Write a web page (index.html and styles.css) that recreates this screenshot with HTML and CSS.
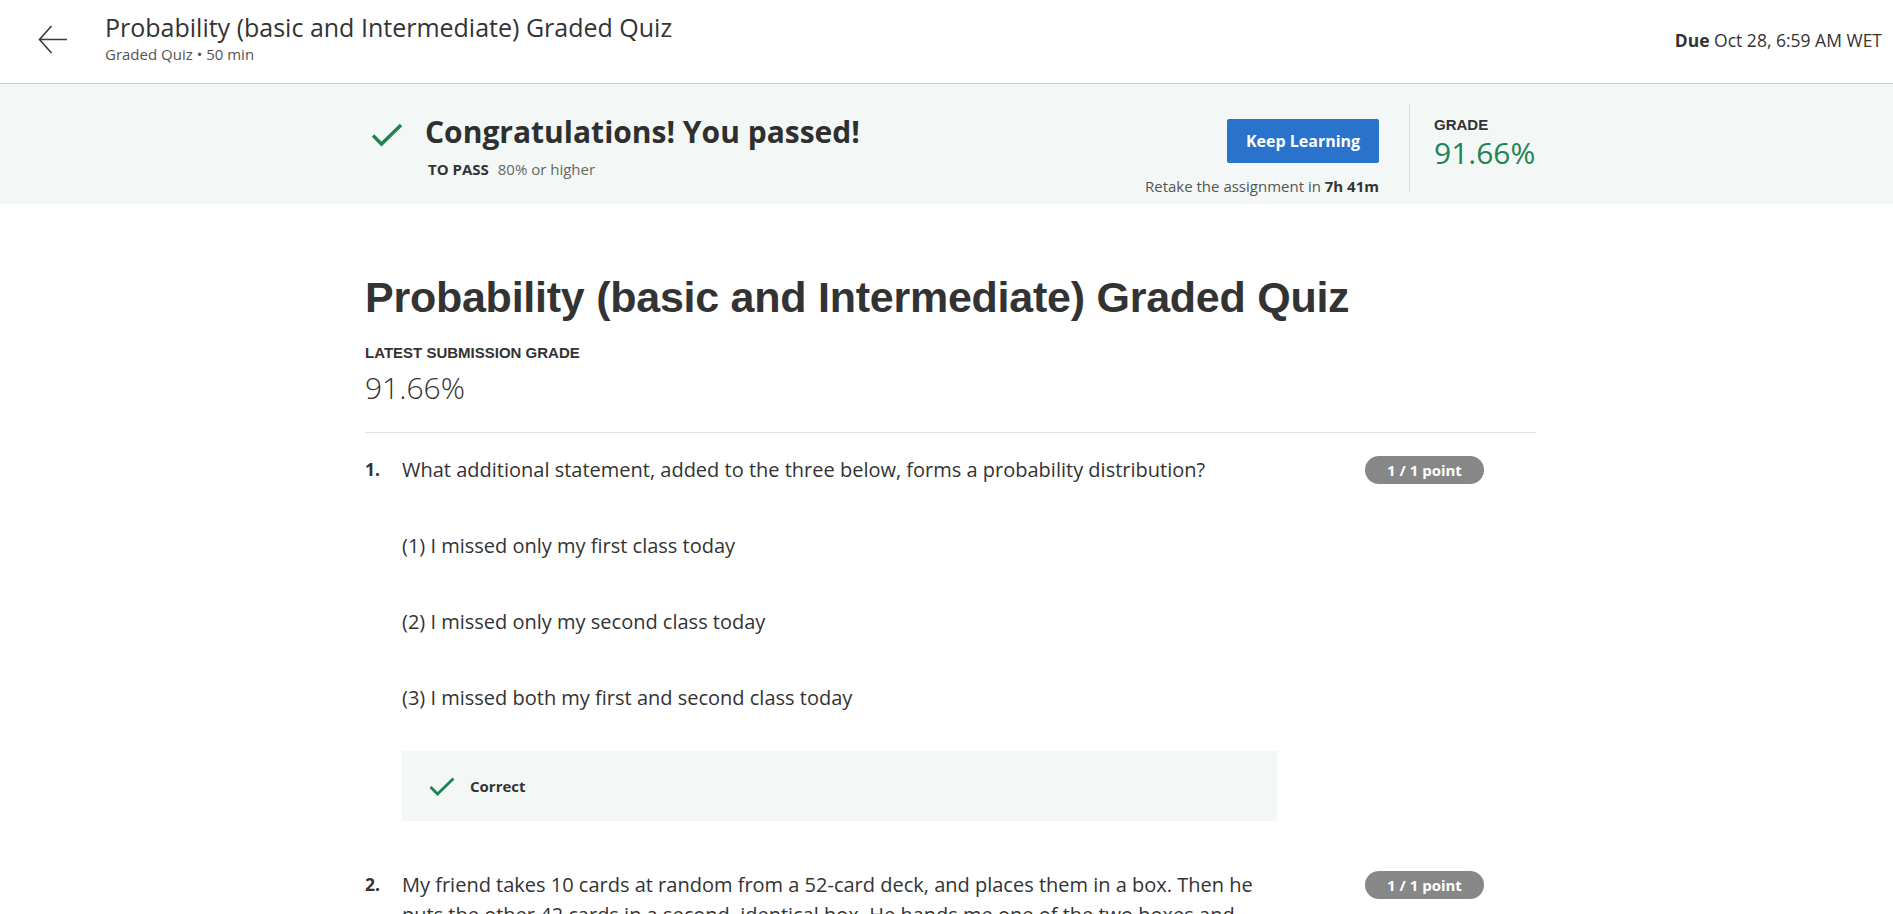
FILE: index.html
```html
<!DOCTYPE html>
<html lang="en">
<head>
<meta charset="utf-8">
<title>Probability (basic and Intermediate) Graded Quiz</title>
<link rel="stylesheet" href="styles.css">
</head>
<body>
<header class="topbar">
  <svg class="back" viewBox="0 0 30 29" width="30" height="29" aria-hidden="true">
    <path d="M29 14.5 H1.5 M13.5 1 L1.5 14.5 L13.5 28" fill="none" stroke="#3c3c3c" stroke-width="1.6"/>
  </svg>
  <div class="topbar-titles">
    <div class="topbar-title">Probability (basic and Intermediate) Graded Quiz</div>
    <div class="topbar-sub">Graded Quiz • 50 min</div>
  </div>
  <div class="due"><b>Due</b> Oct 28, 6:59 AM WET</div>
</header>

<section class="banner">
  <div class="wrap banner-inner">
    <div class="passed">
      <svg class="pass-check" viewBox="0 0 32 24" width="32" height="24" aria-hidden="true">
        <path d="M2 12.5 L10.5 21 L30 2" fill="none" stroke="#1f8354" stroke-width="3.4"/>
      </svg>
      <div class="passed-text">
        <div class="congrats">Congratulations! You passed!</div>
        <div class="topass"><span class="topass-label">TO PASS</span> 80% or higher</div>
      </div>
    </div>
    <div class="actions">
      <button class="btn-primary">Keep Learning</button>
      <div class="retake">Retake the assignment in <b>7h 41m</b></div>
    </div>
    <div class="vdivider"></div>
    <div class="grade">
      <div class="grade-label">GRADE</div>
      <div class="grade-value">91.66%</div>
    </div>
  </div>
</section>

<main class="wrap main">
  <h1 class="quiz-title">Probability (basic and Intermediate) Graded Quiz</h1>
  <div class="latest-label">LATEST SUBMISSION GRADE</div>
  <div class="latest-value">91.66%</div>
  <hr class="divider">

  <div class="question">
    <div class="qnum">1.</div>
    <div class="qbody">
      <p class="qtext">What additional statement, added to the three below, forms a probability distribution?</p>
      <p class="qopt">(1) I missed only my first class today</p>
      <p class="qopt">(2) I missed only my second class today</p>
      <p class="qopt">(3) I missed both my first and second class today</p>
      <div class="feedback">
        <svg class="fb-check" viewBox="0 0 26 19" width="26" height="19" aria-hidden="true">
          <path d="M1.5 10 L8.5 17 L24.5 1.5" fill="none" stroke="#1f8354" stroke-width="2.8"/>
        </svg>
        <span>Correct</span>
      </div>
    </div>
    <div class="points">1 / 1 point</div>
  </div>

  <div class="question q2">
    <div class="qnum">2.</div>
    <div class="qbody">
      <p class="qtext">My friend takes 10 cards at random from a 52-card deck, and places them in a box. Then he puts the other 42 cards in a second, identical box. He hands me one of the two boxes and asks me to draw out the top card.</p>
    </div>
    <div class="points">1 / 1 point</div>
  </div>
</main>
</body>
</html>
```

FILE: styles.css
```css
* { box-sizing: border-box; }

body {
  margin: 0;
  font-family: "Open Sans", "Liberation Sans", sans-serif;
  color: #333;
  background: #fff;
}

/* ---------- top bar ---------- */
.topbar {
  display: flex;
  align-items: flex-start;
  height: 84px;
  padding: 11px 11px 0 38px;
  border-bottom: 1px solid #c9c9c9;
}
.back {
  margin-top: 14px;
  margin-right: 37px;
  flex: 0 0 auto;
}
.topbar-titles { flex: 1 1 auto; }
.topbar-title {
  font-size: 25px;
  line-height: 32px;
  color: #333;
}
.topbar-sub {
  font-size: 15px;
  line-height: 20px;
  margin-top: 1px;
  color: #555;
}
.due {
  margin-top: 17px;
  font-size: 17.5px;
  line-height: 24px;
  color: #333;
}
.due b { font-weight: 700; }

/* ---------- layout wrapper ---------- */
.wrap {
  max-width: 1179px;
  margin: 0 auto;
  padding-left: 8px;
}

/* ---------- banner ---------- */
.banner {
  background: #f3f8f6;
  height: 120px;
}
.banner-inner {
  display: flex;
  align-items: flex-start;
  height: 120px;
}
.passed {
  flex: 1 1 auto;
  display: flex;
  align-items: flex-start;
  padding-top: 28px;
}
.pass-check {
  margin-left: 6px;
  margin-top: 11px;
  margin-right: 22px;
}
.congrats {
  font-size: 30px;
  line-height: 40px;
  font-weight: 700;
  color: #2f2f2f;
}
.topass {
  font-size: 15px;
  line-height: 20px;
  color: #666;
  margin-top: 7px;
  padding-left: 3px;
}
.topass-label {
  font-weight: 700;
  color: #333;
  margin-right: 5px;
}
.actions {
  display: flex;
  flex-direction: column;
  align-items: flex-end;
  padding-top: 35px;
}
.btn-primary {
  font-family: "Open Sans", sans-serif;
  font-size: 16px;
  font-weight: 700;
  color: #fff;
  background: #2a73cc;
  border: none;
  border-radius: 2px;
  height: 44px;
  width: 152px;
  padding: 0;
}
.retake {
  margin-top: 13px;
  font-size: 15px;
  line-height: 20px;
  color: #555;
}
.retake b { color: #333; }
.vdivider {
  width: 1px;
  height: 88px;
  background: #dcdcdc;
  margin: 20px 24px 0 30px;
}
.grade {
  width: 102px;
  padding-top: 31px;
}
.grade-label {
  font-family: "Liberation Sans", Arial, sans-serif;
  font-weight: 700;
  font-size: 15px;
  line-height: 20px;
  color: #333;
}
.grade-value {
  font-size: 30px;
  line-height: 36px;
  color: #1f8354;
}

/* ---------- main ---------- */
.main { padding-top: 67px; }
.quiz-title {
  margin: 0;
  font-family: "Liberation Sans", Arial, sans-serif;
  font-weight: 700;
  font-size: 43px;
  letter-spacing: -0.25px;
  line-height: 52px;
  color: #333;
}
.latest-label {
  margin-top: 20px;
  font-family: "Liberation Sans", Arial, sans-serif;
  font-weight: 700;
  font-size: 15px;
  line-height: 20px;
  color: #333;
}
.latest-value {
  margin-top: 5px;
  font-size: 30px;
  font-weight: 300;
  line-height: 40px;
  color: #333;
}
.divider {
  margin: 24px 0 0;
  border: none;
  border-top: 1px solid #e1e1e1;
}

.question {
  display: flex;
  align-items: flex-start;
  margin-top: 22px;
}
.q2 { margin-top: 49px; }
.qnum {
  flex: 0 0 37px;
  font-size: 17.5px;
  font-weight: 700;
  line-height: 28px;
  color: #333;
}
.qbody { flex: 0 0 875px; }
.qtext, .qopt {
  margin: 0;
  font-size: 20px;
  line-height: 30px;
  color: #333;
}
.qopt { margin-top: 46px; }
.feedback {
  display: flex;
  align-items: center;
  margin-top: 38px;
  height: 70px;
  background: #f3f8f6;
  padding-left: 27px;
  font-size: 15px;
  font-weight: 700;
  color: #333;
}
.fb-check { margin-right: 15px; }
.points {
  margin-left: 88px;
  margin-top: 1px;
  width: 119px;
  height: 28px;
  border-radius: 14px;
  background: #878787;
  color: #fff;
  font-size: 15px;
  font-weight: 700;
  line-height: 28px;
  text-align: center;
}
```
